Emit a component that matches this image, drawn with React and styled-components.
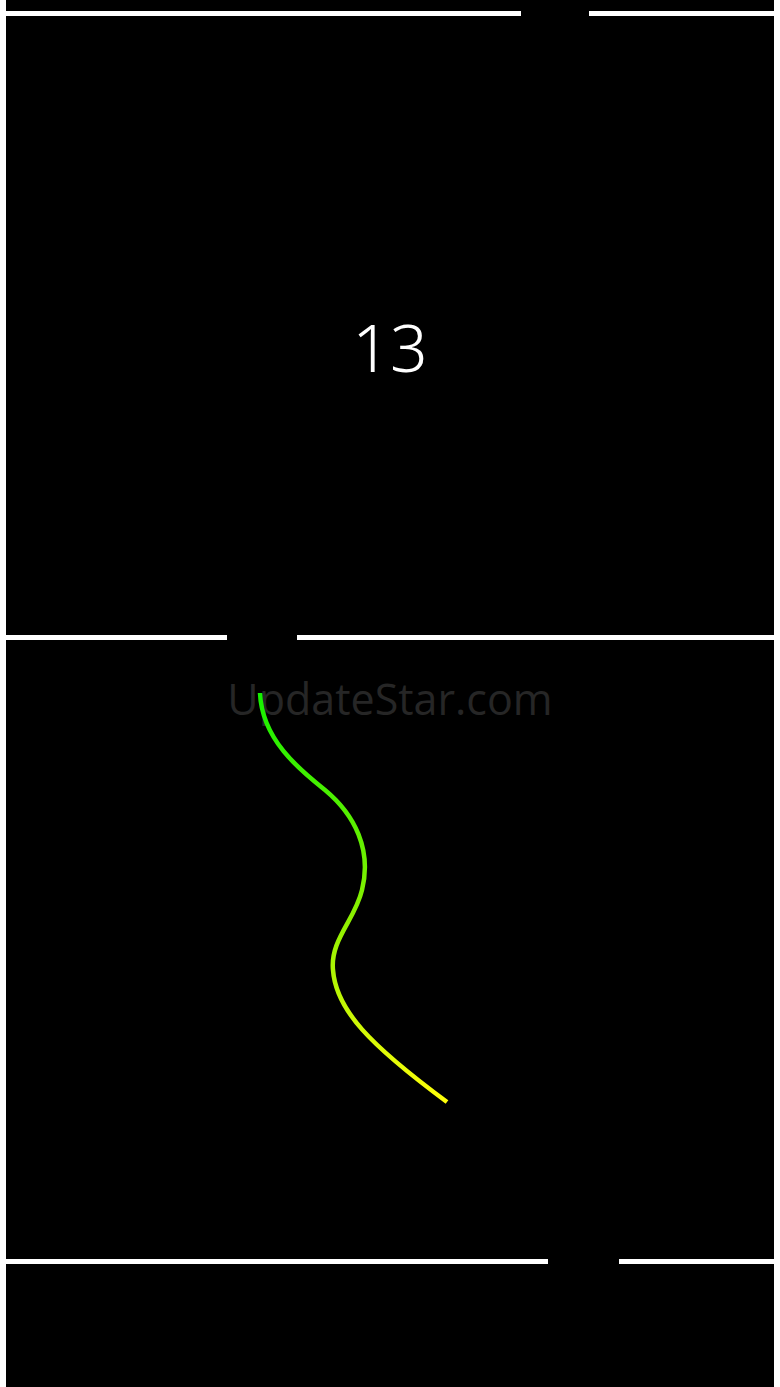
import React from 'react';
import styled, { createGlobalStyle } from 'styled-components';

const GlobalStyle = createGlobalStyle`
  html, body {
    margin: 0;
    padding: 0;
    background: #ffffff;
  }
`;

const Page = styled.div`
  display: flex;
  flex-direction: column;
  height: 1387px;
  overflow: hidden;
  background: #ffffff;
`;

const Panel = styled.section`
  position: relative;
  margin: 0 6px;
  height: ${(p) => (p.$height ? `${p.$height}px` : 'auto')};
  flex: ${(p) => (p.$grow ? 1 : 'none')};
  background: #000000;
  display: flex;
  flex-direction: column;
  align-items: center;
`;

const Separator = styled.div`
  display: flex;
  height: 5px;
  background: #ffffff;
`;

const Opening = styled.div`
  margin-left: ${(p) => p.$left}px;
  width: ${(p) => p.$width}px;
  background: #000000;
`;

const Score = styled.div`
  padding-top: 297px;
  font-family: "Noto Sans", "DejaVu Sans", sans-serif;
  font-weight: 300;
  font-size: 66px;
  line-height: 66px;
  color: #ffffff;
`;

const Watermark = styled.div`
  padding-top: 34px;
  font-family: "Open Sans", "Noto Sans", sans-serif;
  font-size: 43px;
  line-height: 50px;
  color: #262626;
  user-select: none;
`;

const Trail = styled.svg`
  position: absolute;
  left: -6px;
  top: 0;
  width: 780px;
  height: 619px;
  overflow: visible;
`;

const Gate = ({ left, width }) => (
  <Separator>
    <Opening $left={left} $width={width} />
  </Separator>
);

const WaveTrail = () => (
  <Trail viewBox="0 640 780 619">
    <defs>
      <linearGradient id="trail" x1="0" y1="693" x2="0" y2="1102" gradientUnits="userSpaceOnUse">
        <stop offset="0" stopColor="#14f000" />
        <stop offset="0.55" stopColor="#8cf000" />
        <stop offset="1" stopColor="#ffff0a" />
      </linearGradient>
    </defs>
    <path
      d="M260 693 C 262 740, 300 770, 325 790 C 355 815, 372 850, 362 890 C 355 920, 330 940, 333 970 C 336 1010, 370 1045, 447 1102"
      fill="none"
      stroke="url(#trail)"
      strokeWidth="4.5"
      strokeLinecap="butt"
    />
  </Trail>
);

const App = () => (
  <>
    <GlobalStyle />
    <Page>
      <Panel $height={11} />
      <Gate left={521} width={68} />
      <Panel $height={619}>
        <Score>13</Score>
      </Panel>
      <Gate left={227} width={70} />
      <Panel $height={619}>
        <Watermark>UpdateStar.com</Watermark>
        <WaveTrail />
      </Panel>
      <Gate left={548} width={71} />
      <Panel $grow />
    </Page>
  </>
);

export default App;
